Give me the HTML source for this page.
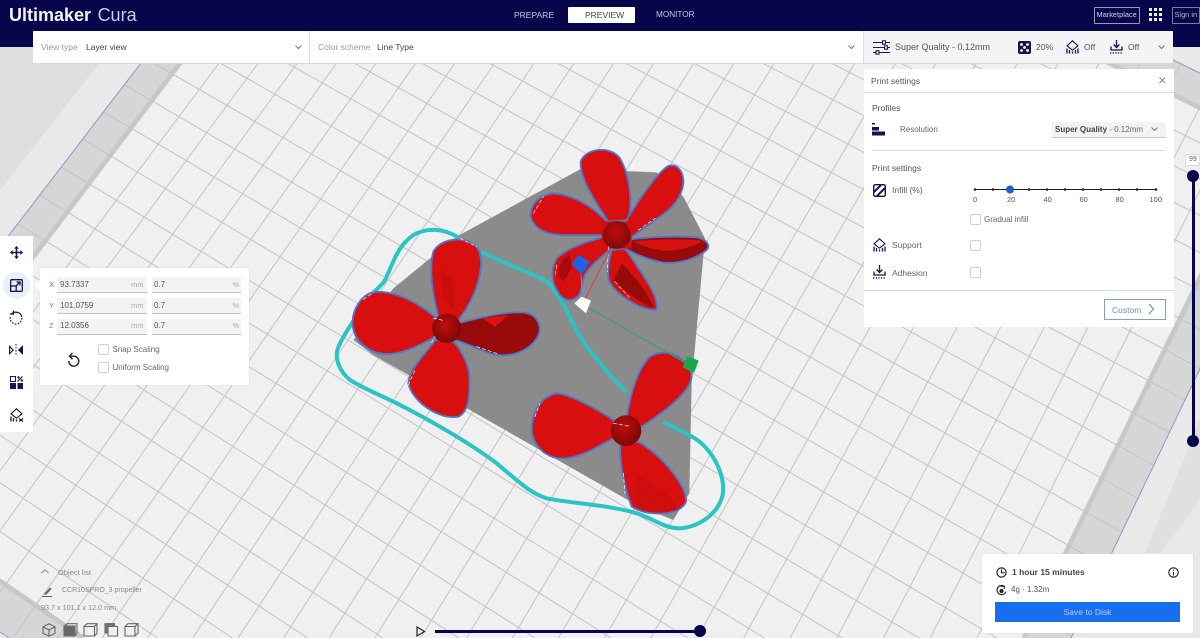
<!DOCTYPE html>
<html>
<head>
<meta charset="utf-8">
<style>
html,body{margin:0;padding:0;width:1200px;height:638px;overflow:hidden;background:#e4e4e4;font-family:"Liberation Sans",sans-serif;color:#444}
.a{position:absolute}
.t{position:absolute;white-space:nowrap;font-size:8.5px;line-height:12px;color:#555}
.cb{position:absolute;width:11px;height:11px;box-sizing:border-box;border:1px solid #d0d0d0;border-radius:2px;background:#fff}
.fld{position:absolute;height:15px;background:#f3f3f3;border-bottom:1px solid #c4c4c4}
.hr{position:absolute;height:1px;background:#ddd}
svg{position:absolute;overflow:visible}
svg.clip{overflow:hidden}
</style>
</head>
<body>
<div class="a" style="left:0;top:0;width:1200px;height:638px;overflow:hidden">
<!-- background + build plate -->
<svg class="a clip" style="left:0;top:0" width="1200" height="638" viewBox="0 0 1200 638">
<rect width="1200" height="638" fill="#e9e9e9"/>
<polygon points="0,47 112,47 0,190" fill="#dedede"/>
<polygon points="1200,420 1145,553 1200,553" fill="#e0e0e0"/>
<polygon points="1200,500 1160,553 1200,553" fill="#e8e8e8"/>
<polygon points="423.5,-305.4 1314.7,129 1071.1,638 8.8,638 -192.7,498.2" fill="#d6d6d6"/>
<polygon points="432.5,-270.3 1266.9,140.7 1024,638 83.2,638 -139.8,485.3" fill="#f0f0f0"/>
<polyline points="83.2,638 -139.8,485.3 432.5,-270.3 1266.9,140.7 1024,638" fill="none" stroke="#c9c9c9" stroke-width="5"/>
<path fill="none" stroke="#c3c3c3" stroke-width="1" d="M449.5 -292.8L-164.5 517.8M475.7 -280L-136 537.6M502.1 -267.1L-107.1 557.6M528.7 -254.1L-78 577.8M555.6 -241L-48.6 598.2M582.7 -227.8L-18.9 618.8M610.1 -214.5L13 638M637.7 -201L57.1 638M665.6 -187.5L102.2 638M693.7 -173.8L147.4 638M722 -159.9L192.7 638M750.6 -146L238.1 638M779.5 -131.9L283.5 638M808.7 -117.7L329.1 638M838.1 -103.3L374.8 638M867.8 -88.9L420.6 638M897.8 -74.2L466.4 638M928 -59.5L512.3 638M958.6 -44.6L558.4 638M989.4 -29.6L604.5 638M1020.6 -14.4L650.7 638M1052 .9L697.1 638M1083.7 16.4L743.6 638M1115.8 32L790.1 638M1148.1 47.8L836.7 638M1180.8 63.7L883.4 638M1213.7 79.8L930.2 638M1247 96L977 638M1280.7 112.4L1024 638"/>
<path fill="none" stroke="#c3c3c3" stroke-width="1" d="M406.5 -283.2L1301 157.5M389.2 -260.6L1287.2 186.4M371.7 -237.9L1273.2 215.7M354.1 -214.8L1259 245.4M336.2 -191.5L1244.5 275.5M318.1 -167.9L1229.9 306M299.7 -144L1215.1 337M281.2 -119.8L1200.1 368.4M262.4 -95.3L1184.9 400.2M243.4 -70.5L1169.4 432.5M224.2 -45.4L1153.7 465.3M204.7 -20L1137.8 498.5M185 5.7L1121.7 532.2M165 31.7L1105.3 566.4M144.8 58.1L1088.7 601.1M124.3 84.8L1071.8 636.4M103.6 111.9L996.8 638M82.6 139.3L919 638M61.3 167.1L841.8 638M39.7 195.2L764.6 638M17.8 223.7L687.8 638M-4.3 252.6L611.2 638M-26.7 281.8L535 638M-49.5 311.5L458.9 638M-72.5 341.6L383.1 638M-95.9 372L307.7 638M-119.6 402.9L232.4 638M-143.6 434.3L157.4 638M-168 466L82.7 638"/>
<polyline points="8.8,638 -192.7,498.2 423.5,-305.4 1314.7,129 1071.1,638" fill="none" stroke="#8b98c6" stroke-width="1"/>
</svg>

<!-- model -->
<svg class="a" style="left:0;top:0" width="1200" height="638">
<defs>
<pattern id="s1" width="7" height="7" patternUnits="userSpaceOnUse" patternTransform="rotate(28)"><rect width="7" height="7" fill="#e01010"/><rect width="7" height="2" fill="#c40c0c"/></pattern>
<pattern id="s2" width="7" height="7" patternUnits="userSpaceOnUse" patternTransform="rotate(-35)"><rect width="7" height="7" fill="#e01010"/><rect width="7" height="2" fill="#c40c0c"/></pattern>
<pattern id="s3" width="7" height="7" patternUnits="userSpaceOnUse" patternTransform="rotate(70)"><rect width="7" height="7" fill="#e01010"/><rect width="7" height="2" fill="#c40c0c"/></pattern>
<pattern id="d1" width="7" height="7" patternUnits="userSpaceOnUse" patternTransform="rotate(25)"><rect width="7" height="7" fill="#8f0a0a"/><rect width="7" height="2" fill="#b00c0c"/></pattern>
<radialGradient id="hub" cx=".45" cy=".4" r=".6"><stop offset="0" stop-color="#c20d0d"/><stop offset="1" stop-color="#7c0808"/></radialGradient>
</defs>
<g transform="translate(330 140) scale(.33333)">
<polygon points="750,88 980,97 1060,170 1125,295 1085,730 1078,1060 1030,1140 920,1095 130,645 70,600 190,445 380,290" fill="#8b8b8b"/>
<path d="M455 335 C530 375 610 400 650 425 C700 470 720 550 770 620 C810 670 850 720 890 755 M1000 845 C1040 870 1090 885 1120 915 C1165 960 1185 1020 1178 1065 C1165 1120 1110 1160 1050 1165 C1000 1165 970 1135 920 1120 C840 1095 720 1090 650 1075 C600 1060 560 1020 500 970 C420 910 300 840 200 790 C150 765 100 745 60 720 C30 695 15 660 22 630 C35 590 80 530 105 490 C130 450 150 445 165 420 C190 370 200 320 250 285 C290 262 340 265 385 292" fill="none" stroke="#2bc4c4" stroke-width="12"/>

<g stroke="#4a78cc" stroke-width="5.5" stroke-linejoin="round">
<!-- prop 1 -->
<path d="M835 245 C800 190 750 120 752 65 C765 25 840 15 870 55 C895 100 910 170 895 240Z" fill="url(#s1)"/>
<path d="M890 240 C925 180 975 110 1005 85 C1030 62 1062 85 1060 130 C1055 175 1025 205 990 230 C960 250 935 270 905 290Z" fill="url(#s2)"/>
<path d="M830 245 C790 200 730 165 670 160 C625 165 600 195 602 230 C610 265 650 285 700 285 C745 285 790 285 830 285Z" fill="url(#s3)"/>
<path d="M905 298 C960 290 1040 288 1100 292 C1130 298 1142 315 1130 330 C1100 355 1050 372 1000 368 C960 360 920 345 885 325Z" fill="url(#d1)"/>
<path d="M845 330 C835 370 830 400 838 425 C860 465 930 510 978 510 C990 480 950 420 925 385 C910 360 895 340 885 325Z" fill="url(#s1)"/>
<path d="M830 290 C780 300 710 325 680 355 C662 385 662 430 690 465 C705 482 725 488 748 465 C760 440 752 415 778 385 C805 355 835 335 855 315Z" fill="url(#s1)"/>
</g>
<path d="M910 303 C980 298 1060 296 1120 303 C1090 318 1045 335 1000 332 C960 326 930 316 910 303Z" fill="#d81010"/>
<path d="M875 370 C905 400 950 450 970 503 C930 490 880 450 850 420Z" fill="#960a0a"/>
<path d="M695 360 L720 345 L725 385 L700 425 L682 405Z" fill="#a80b0b"/>
<path d="M815 245 L905 245 L905 325 L815 325Z" fill="#d20e0e"/>
<circle cx="860" cy="285" r="42" fill="url(#hub)"/>
<!-- prop 2 -->
<g stroke="#4a78cc" stroke-width="5.5" stroke-linejoin="round">
<path d="M325 530 C310 470 295 390 310 335 C330 295 405 285 440 320 C465 355 450 420 430 465 C415 500 400 520 385 540Z" fill="url(#s1)"/>
<path d="M315 530 C270 495 210 455 140 455 C95 458 65 510 68 555 C72 605 120 645 180 642 C230 638 280 610 315 590Z" fill="url(#s2)"/>
<path d="M385 550 C440 535 530 512 585 518 C625 525 640 565 620 595 C590 640 530 655 480 640 C440 625 410 610 375 600Z" fill="url(#d1)"/>
<path d="M315 600 C290 640 240 680 235 730 C245 780 320 840 385 830 C420 815 420 750 418 700 C410 660 390 625 370 605Z" fill="url(#s3)"/>
</g>
<path d="M460 535 L535 525 L495 560Z" fill="#e01010"/>
<path d="M330 385 L375 430 L370 510 L340 470Z" fill="#cc0d0d"/>
<circle cx="350" cy="565" r="44" fill="url(#hub)"/>
<!-- prop 3 -->
<g stroke="#4a78cc" stroke-width="5.5" stroke-linejoin="round">
<path d="M890 835 C900 770 920 690 960 650 C1005 625 1060 640 1085 700 C1090 750 1010 810 935 860Z" fill="url(#s2)"/>
<path d="M850 840 C790 800 710 760 680 760 C630 770 605 820 605 870 C610 920 650 960 710 955 C770 945 820 910 850 895Z" fill="url(#s1)"/>
<path d="M870 915 C870 980 885 1050 905 1100 C950 1130 1050 1130 1068 1085 C1072 1040 1000 950 925 905Z" fill="url(#s3)"/>
</g>
<path d="M920 1000 L1010 1060 L1050 1110 C1000 1122 950 1118 915 1095Z" fill="#b50c0c" opacity=".25"/>
<circle cx="888" cy="872" r="46" fill="url(#hub)"/>
<!-- white specks -->
<g fill="none" stroke="#fff" stroke-width="2" stroke-linecap="round" stroke-dasharray="10 8">
<path d="M100 478 L130 458M305 608 L315 590M310 535 L345 542M235 735 L255 690M390 295 L440 320M440 620 L505 642M835 320 L832 395M925 270 L975 235M855 425 L900 475M610 220 L640 170M615 830 L630 790M630 935 L665 955M880 1000 L885 1060M850 850 L895 858M680 375 L675 410"/>
</g>
<!-- gizmo -->
<path d="M758 490 L840 330" stroke="#cc4444" stroke-width="3"/>
<path d="M775 503 L1065 668" stroke="#2ea84f" stroke-width="3"/>
<path d="M758 490 L752 380" stroke="#6d8fd0" stroke-width="3"/>
<polygon points="725,372 745,345 780,365 755,405" fill="#1f63e0"/>
<polygon points="733,490 755,470 783,482 768,520" fill="#fafafa"/>
<polygon points="1058,682 1072,648 1106,662 1092,699" fill="#17a84a"/>
</g>
</svg>

<!-- header -->
<div class="a" style="left:0;top:0;width:1200px;height:47px;background:#08064a"></div>
<div class="t" style="left:9px;top:3.5px;font-size:18px;line-height:22px;color:#f2f2f8;word-spacing:1.5px"><b>Ultimaker</b> <span style="color:#c8cbe4">Cura</span></div>
<div class="t" style="left:514px;top:8.5px;color:#c9c9dc;font-size:8.5px">PREPARE</div>
<div class="a" style="left:568px;top:6.5px;width:67px;height:16px;background:#fff;border-radius:1px"></div>
<div class="t" style="left:585px;top:8.5px;color:#444;font-size:8.5px">PREVIEW</div>
<div class="t" style="left:656px;top:9px;color:#c9c9dc;font-size:8.2px">MONITOR</div>
<div class="a" style="left:1094px;top:7px;width:44px;height:15px;border:1px solid #9a9ab4;border-radius:1px"></div>
<div class="t" style="left:1096.5px;top:8.5px;color:#d0d0e0;font-size:7.4px">Marketplace</div>
<svg style="left:1149px;top:8px" width="14" height="14" fill="#f0f0f6"><rect x="0" y="0" width="3" height="3"/><rect x="5" y="0" width="3" height="3"/><rect x="10" y="0" width="3" height="3"/><rect x="0" y="5" width="3" height="3"/><rect x="5" y="5" width="3" height="3"/><rect x="10" y="5" width="3" height="3"/><rect x="0" y="10" width="3" height="3"/><rect x="5" y="10" width="3" height="3"/><rect x="10" y="10" width="3" height="3"/></svg>
<div class="a" style="left:1172px;top:7px;width:26px;height:15px;border:1px solid #7c7c9c;border-radius:1px"></div>
<div class="t" style="left:1174.5px;top:8.5px;color:#b8b8cc;font-size:7.4px">Sign in</div>

<!-- toolbar -->
<div class="a" style="left:33px;top:31px;width:830px;height:32px;background:#fff;border-bottom:1px solid #d8d8d8"></div>
<div class="a" style="left:863px;top:31px;width:310px;height:32px;background:#f4f4f4;border-bottom:1px solid #d8d8d8"></div>
<div class="a" style="left:309px;top:31px;width:1px;height:32px;background:#ddd"></div>
<div class="a" style="left:863px;top:31px;width:1px;height:32px;background:#ddd"></div>
<div class="t" style="left:41px;top:41px;color:#999">View type</div>
<div class="t" style="left:86px;top:41px;color:#444">Layer view</div>
<div class="t" style="left:318px;top:41px;color:#999">Color scheme</div>
<div class="t" style="left:377px;top:41px;color:#444">Line Type</div>
<svg style="left:295px;top:45px" width="8" height="5"><path d="M.5 .5 L3.5 3.5 L6.5 .5" fill="none" stroke="#777"/></svg>
<svg style="left:848px;top:45px" width="8" height="5"><path d="M.5 .5 L3.5 3.5 L6.5 .5" fill="none" stroke="#777"/></svg>
<svg style="left:1158px;top:45px" width="8" height="5"><path d="M.5 .5 L3.5 3.5 L6.5 .5" fill="none" stroke="#777"/></svg>
<svg style="left:873px;top:40px" width="17" height="15" fill="none" stroke="#1c1c50" stroke-width="1.1"><path d="M0 2.5H17M0 7.5H17M0 12.5H17"/><rect x="9.5" y=".8" width="3" height="3.4" fill="#f4f4f4"/><rect x="11.5" y="5.8" width="3" height="3.4" fill="#f4f4f4"/><rect x="3" y="10.8" width="3" height="3.4" fill="#f4f4f4"/></svg>
<div class="t" style="left:895px;top:41px;font-size:9px;color:#555">Super Quality - 0.12mm</div>
<svg style="left:1018px;top:41px" width="13" height="13"><rect width="13" height="13" rx="2" fill="#15154f"/><g fill="#fff"><circle cx="3.5" cy="3.5" r="1.4"/><circle cx="9.5" cy="3.5" r="1.4"/><circle cx="6.5" cy="6.5" r="1.4"/><circle cx="3.5" cy="9.5" r="1.4"/><circle cx="9.5" cy="9.5" r="1.4"/></g></svg>
<div class="t" style="left:1036px;top:41px;color:#555">20%</div>
<svg style="left:1066px;top:40px" width="13" height="14" fill="none" stroke="#15154f" stroke-width="1.1"><path d="M6.5 .8 L12 5.8 L6.5 10.2 L1 5.8Z"/><path d="M1 13.5V8.5M3.5 13.5V10M9.5 13.5V10M12 13.5V8.5M6.5 13.5V11.5" stroke-width="1.3"/></svg>
<div class="t" style="left:1084px;top:41px;color:#555">Off</div>
<svg style="left:1110px;top:40px" width="13" height="14" fill="none" stroke="#15154f" stroke-width="1.3"><path d="M6.5 0V7M3.7 4.5L6.5 7.5L9.3 4.5"/><path d="M1 6.5V10H12V6.5"/><path d="M0 13H13" stroke-dasharray="1.4 1.2"/></svg>
<div class="t" style="left:1128px;top:41px;color:#555">Off</div>

<!-- Print settings panel -->
<div class="a" style="left:864px;top:69px;width:310px;height:258px;background:#fff"></div>
<div class="t" style="left:871px;top:75px;color:#555">Print settings</div>
<svg style="left:1159px;top:77px" width="7" height="7"><path d="M.5 .5L6 6M6 .5L.5 6" stroke="#888" fill="none"/></svg>
<div class="hr" style="left:864px;top:92px;width:310px"></div>
<div class="t" style="left:872px;top:101.5px;color:#555">Profiles</div>
<svg style="left:872px;top:123px" width="13" height="13" fill="#15154f"><rect x="0" y="0" width="3" height="1.5"/><rect x="0" y="4" width="7" height="3.5"/><rect x="0" y="8.5" width="13" height="4"/></svg>
<div class="t" style="left:900px;top:123.5px;font-size:8px;color:#666">Resolution</div>
<div class="a" style="left:1052px;top:122px;width:114px;height:15px;background:#f3f3f3;border-bottom:1px solid #ccc"></div>
<div class="t" style="left:1055px;top:123.5px;font-size:8px;color:#666"><b style="color:#444">Super Quality</b> - 0.12mm</div>
<svg style="left:1151px;top:127px" width="8" height="5"><path d="M.5 .5L3.5 3.5L6.5 .5" fill="none" stroke="#777"/></svg>
<div class="hr" style="left:872px;top:150px;width:294px"></div>
<div class="t" style="left:872px;top:162px;color:#555">Print settings</div>
<svg style="left:873px;top:184px" width="13" height="13"><rect x=".7" y=".7" width="11.6" height="11.6" rx="1.5" fill="#fff" stroke="#15154f" stroke-width="1.4"/><path d="M1 8L8 1M4 12L12 4" stroke="#15154f" stroke-width="2" fill="none"/></svg>
<div class="t" style="left:892px;top:184px;color:#555">Infill (%)</div>
<svg style="left:970px;top:183px" width="195" height="14"><path d="M5 6.5H186" stroke="#222" stroke-width="1"/><g fill="#222"><circle cx="5" cy="6.5" r="1.3"/><circle cx="23" cy="6.5" r="1.3"/><circle cx="59" cy="6.5" r="1.3"/><circle cx="77" cy="6.5" r="1.3"/><circle cx="95" cy="6.5" r="1.3"/><circle cx="113" cy="6.5" r="1.3"/><circle cx="131" cy="6.5" r="1.3"/><circle cx="149" cy="6.5" r="1.3"/><circle cx="167" cy="6.5" r="1.3"/><circle cx="186" cy="6.5" r="1.3"/></g><circle cx="40" cy="6.5" r="4" fill="#2060c0"/></svg>
<div class="t" style="left:973px;top:193.5px;font-size:7.5px">0</div>
<div class="t" style="left:1007px;top:193.5px;font-size:7.5px">20</div>
<div class="t" style="left:1043.5px;top:193.5px;font-size:7.5px">40</div>
<div class="t" style="left:1079.5px;top:193.5px;font-size:7.5px">60</div>
<div class="t" style="left:1115.5px;top:193.5px;font-size:7.5px">80</div>
<div class="t" style="left:1149.5px;top:193.5px;font-size:7.5px">100</div>
<div class="cb" style="left:970px;top:214px"></div>
<div class="t" style="left:984px;top:213.5px;font-size:8px;color:#666">Gradual infill</div>
<svg style="left:873px;top:238px" width="13" height="14" fill="none" stroke="#15154f" stroke-width="1.1"><path d="M6.5 .8L12 5.8L6.5 10.2L1 5.8Z"/><path d="M1 13.5V8.5M3.5 13.5V10M9.5 13.5V10M12 13.5V8.5M6.5 13.5V11.5" stroke-width="1.3"/></svg>
<div class="t" style="left:892px;top:239px;color:#666">Support</div>
<div class="cb" style="left:970px;top:240px"></div>
<svg style="left:873px;top:265px" width="13" height="14" fill="none" stroke="#15154f" stroke-width="1.3"><path d="M6.5 0V7M3.7 4.5L6.5 7.5L9.3 4.5"/><path d="M1 6.5V10H12V6.5"/><path d="M0 13H13" stroke-dasharray="1.4 1.2"/></svg>
<div class="t" style="left:892px;top:267px;color:#666">Adhesion</div>
<div class="cb" style="left:970px;top:267px"></div>
<div class="hr" style="left:864px;top:290px;width:310px"></div>
<div class="a" style="left:1104px;top:299px;width:60px;height:18.5px;border:1px solid #7da6ac"></div>
<div class="t" style="left:1112px;top:303.5px;color:#6a95a3">Custom</div>
<svg style="left:1148px;top:303px" width="7" height="12"><path d="M1 1L5.5 6L1 11" fill="none" stroke="#6a95a3" stroke-width="1.2"/></svg>

<!-- layer slider -->
<div class="a" style="left:1185px;top:154px;width:15px;height:12px;background:#fff;border:1px solid #ddd;box-sizing:border-box"></div>
<div class="t" style="left:1189px;top:154px;font-size:7px;color:#666">99</div>
<div class="a" style="left:1191.5px;top:176px;width:3px;height:265px;background:#08064a"></div>
<div class="a" style="left:1187px;top:170px;width:12px;height:12px;border-radius:50%;background:#08064a"></div>
<div class="a" style="left:1187px;top:435px;width:12px;height:12px;border-radius:50%;background:#08064a"></div>

<!-- left toolbar -->
<div class="a" style="left:0;top:236px;width:33px;height:196px;background:#fff"></div>
<div class="a" style="left:3px;top:272px;width:27px;height:27px;border-radius:50%;background:#e9effa"></div>
<svg style="left:10px;top:246px" width="13" height="13" fill="#15154f"><path d="M6.5 0L9 2.6H7.3V5.7H10.4V4L13 6.5L10.4 9V7.3H7.3V10.4H9L6.5 13L4 10.4H5.7V7.3H2.6V9L0 6.5L2.6 4V5.7H5.7V2.6H4Z"/></svg>
<svg style="left:10px;top:279px" width="13" height="13" fill="none" stroke="#15154f" stroke-width="1.3"><rect x=".7" y=".7" width="11.6" height="11.6" rx="1"/><rect x=".7" y="7" width="5.5" height="5.3" fill="#e9effa"/><path d="M5.5 7.5L10 3M6.5 3H10V6.5"/></svg>
<svg style="left:9px;top:310px" width="14" height="14" fill="none" stroke="#15154f" stroke-width="1.2"><path d="M3 3.5C6 1 12 2 12.8 7"/><path d="M4.5 .5V4H1"/><path d="M12.8 8A5.8 5.8 0 1 1 1.5 6.5" stroke-dasharray="1.6 1.4"/></svg>
<svg style="left:9px;top:344px" width="14" height="12" fill="#15154f"><path d="M0 1L5 6L0 11Z M1.2 3.6V8.4L3.5 6Z" fill-rule="evenodd"/><path d="M14 1L9 6L14 11Z"/><path d="M7 0V12" stroke="#15154f" stroke-dasharray="1.5 1.5"/></svg>
<svg style="left:10px;top:376px" width="13" height="13" fill="#15154f"><rect x=".5" y=".5" width="5" height="5" fill="none" stroke="#15154f"/><rect y="7" width="6" height="6"/><rect x="7.5" y="7" width="5.5" height="6"/><path d="M7.5 5.5L12.5 .5" stroke="#15154f" stroke-width="1.2"/><circle cx="8.5" cy="1.5" r="1.2"/><circle cx="11.8" cy="4.5" r="1.2"/></svg>
<svg style="left:10px;top:408px" width="13" height="14" fill="none" stroke="#15154f" stroke-width="1.1"><path d="M6.5 .8L12 5.8L6.5 10.2L1 5.8Z"/><path d="M1 13.5V8.5M3.5 13.5V10M6.5 13.5V11.5" stroke-width="1.3"/><path d="M9 10.5L13 13.5M13 10.5L9 13.5"/></svg>

<!-- scale panel -->
<div class="a" style="left:40px;top:268px;width:209px;height:117px;background:#fff;box-shadow:0 0 1px #ccc"></div>
<svg style="left:33px;top:279px" width="8" height="12"><path d="M8 0L1 6L8 12Z" fill="#fff"/></svg>
<div class="t" style="left:49px;top:279px;font-size:7.5px;color:#c05050">X</div>
<div class="t" style="left:49px;top:299.5px;font-size:7.5px;color:#3fa78e">Y</div>
<div class="t" style="left:49px;top:320px;font-size:7.5px;color:#888">Z</div>
<div class="fld" style="left:57px;top:277px;width:90px"></div>
<div class="fld" style="left:152px;top:277px;width:89px"></div>
<div class="fld" style="left:57px;top:298px;width:90px"></div>
<div class="fld" style="left:152px;top:298px;width:89px"></div>
<div class="fld" style="left:57px;top:319px;width:90px"></div>
<div class="fld" style="left:152px;top:319px;width:89px"></div>
<div class="t" style="left:60px;top:279px;font-size:8px">93.7337</div>
<div class="t" style="left:60px;top:299.5px;font-size:8px">101.0759</div>
<div class="t" style="left:60px;top:320px;font-size:8px">12.0356</div>
<div class="t" style="left:131px;top:279px;font-size:7.5px;color:#aaa">mm</div>
<div class="t" style="left:131px;top:299.5px;font-size:7.5px;color:#aaa">mm</div>
<div class="t" style="left:131px;top:320px;font-size:7.5px;color:#aaa">mm</div>
<div class="t" style="left:154px;top:279px;font-size:8px">0.7</div>
<div class="t" style="left:154px;top:299.5px;font-size:8px">0.7</div>
<div class="t" style="left:154px;top:320px;font-size:8px">0.7</div>
<div class="t" style="left:232.5px;top:279px;font-size:7.5px;color:#aaa">%</div>
<div class="t" style="left:232.5px;top:299.5px;font-size:7.5px;color:#aaa">%</div>
<div class="t" style="left:232.5px;top:320px;font-size:7.5px;color:#aaa">%</div>
<svg style="left:67px;top:352px" width="13" height="15" fill="none" stroke="#222" stroke-width="1.4"><path d="M3 4.2H7A5 5 0 1 1 1.8 9"/><path d="M5.5 .8L2.5 4.2L5.5 7.2"/></svg>
<div class="cb" style="left:98px;top:344px"></div>
<div class="t" style="left:112.5px;top:344px;font-size:8px;color:#666">Snap Scaling</div>
<div class="cb" style="left:98px;top:362px"></div>
<div class="t" style="left:112.5px;top:362px;font-size:8px;color:#666">Uniform Scaling</div>

<!-- object list -->
<svg style="left:41px;top:569px" width="9" height="5"><path d="M.5 4L4 .8L7.5 4" fill="none" stroke="#888"/></svg>
<div class="t" style="left:58px;top:567px;font-size:7.5px;color:#888">Object list</div>
<svg style="left:42px;top:586px" width="11" height="11"><path d="M2 8L8 1.5L9.5 3L4 9Z" fill="#666"/><path d="M0 10.5H10" stroke="#666"/></svg>
<div class="t" style="left:62px;top:585px;font-size:7px;color:#888">CCR10SPRO_3 propeller</div>
<div class="t" style="left:41px;top:601.5px;font-size:7.2px;color:#888">93.7 x 101.1 x 12.0 mm</div>
<svg style="left:42px;top:623px" width="100" height="14" fill="none" stroke="#666" stroke-width="1.1">
<path d="M7 .7L13 3.8V10.2L7 13.3L1 10.2V3.8Z M1 3.8L7 7L13 3.8 M7 7V13.3"/>
<path d="M22 3H33V13H22Z" fill="#666"/><path d="M22 3L25 .7H35V10L33 13"/>
<path d="M42 3.5H52.5V13H42Z"/><path d="M42 3.5L45 .7H55V10.2L52.5 13M52.5 3.5L55 .7"/>
<path d="M63 .7H72.5V10H63Z" fill="#777"/><path d="M66 3.5H75.5V13H66Z" fill="#f0f0f0"/>
<path d="M83 3.5H93V13H83Z"/><path d="M83 3.5L86 .7H96V10L93 13M93 3.5L96 .7"/>
</svg>

<!-- bottom slider -->
<svg style="left:416px;top:626px" width="10" height="11"><path d="M1 1L8.5 5.5L1 10Z" fill="none" stroke="#222" stroke-width="1.2"/></svg>
<div class="a" style="left:435px;top:629.5px;width:265px;height:3px;background:#08064a"></div>
<div class="a" style="left:694px;top:625px;width:12px;height:12px;border-radius:50%;background:#08064a"></div>

<!-- print card -->
<div class="a" style="left:982px;top:554px;width:211px;height:79px;background:#fff;box-shadow:0 0 1px #ccc"></div>
<svg style="left:996px;top:567px" width="11" height="11" fill="none" stroke="#222" stroke-width="1.2"><circle cx="5.5" cy="5.5" r="4.6"/><path d="M5.5 2.5V5.8H8.5"/></svg>
<div class="t" style="left:1012px;top:566px;font-size:8.5px;font-weight:bold;color:#444">1 hour 15 minutes</div>
<svg style="left:1168px;top:567px" width="11" height="11" fill="none" stroke="#222" stroke-width="1.1"><circle cx="5.5" cy="5.5" r="4.7"/><path d="M5.5 4.8V8.5M5.5 2.5V3.6"/></svg>
<svg style="left:996px;top:585px" width="11" height="11" fill="none" stroke="#222" stroke-width="1.1"><path d="M8.5 1.5A4.6 4.6 0 1 0 10 6.5"/><path d="M4.5 1.2L8.5 1.5L8 4"/><circle cx="5.5" cy="6" r="1.6" fill="#222"/></svg>
<div class="t" style="left:1011px;top:584px;font-size:8px;color:#555">4g · 1.32m</div>
<div class="a" style="left:995px;top:602px;width:185px;height:20px;background:#196ef0"></div>
<div class="t" style="left:995px;top:606px;width:185px;text-align:center;color:#b4d0f8">Save to Disk</div>
</div>
</body>
</html>
